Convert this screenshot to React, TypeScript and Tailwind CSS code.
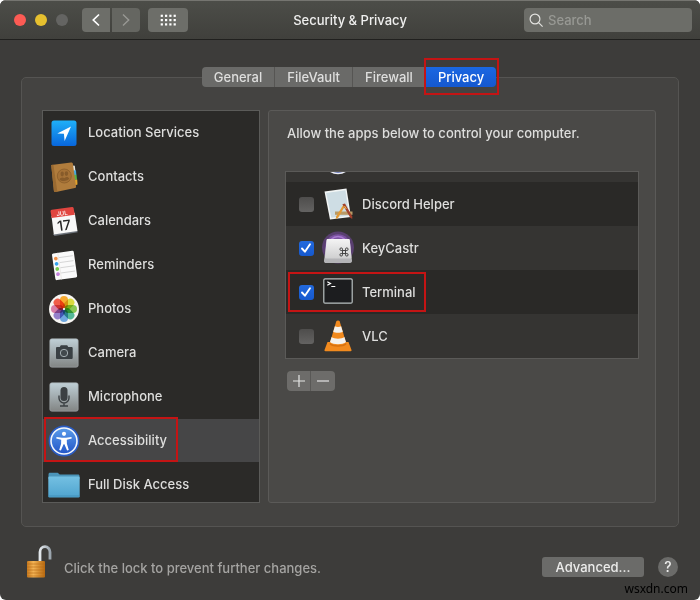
import { useState, type ReactNode } from 'react';

interface SidebarItem {
  label: string;
  icon: ReactNode;
}

interface AppEntry {
  name: string;
  icon: ReactNode;
  checked: boolean;
  highlighted?: boolean;
}

const TABS = ['General', 'FileVault', 'Firewall', 'Privacy'];

function LocationIcon() {
  return (
    <svg viewBox="0 0 32 32" className="size-8" aria-hidden="true">
      <defs>
        <linearGradient id="location-bg" x1="0" y1="0" x2="0" y2="1">
          <stop offset="0" stopColor="#1fb0f8" />
          <stop offset="1" stopColor="#0866dc" />
        </linearGradient>
      </defs>
      <rect x="3.5" y="3.5" width="25" height="25.5" rx="2.5" fill="url(#location-bg)" />
      <path d="M23 9.5 9.3 16.4l6.6.4.7 7.2z" fill="#fff" />
    </svg>
  );
}

function ContactsIcon() {
  return (
    <svg viewBox="0 0 32 32" className="size-8" aria-hidden="true">
      <path d="m24 4.500 2.800.2.600 5.300-2.500.5z" fill="#e4e7e2" />
      <path d="m25 9.500 3-.3.4 5-3 .3z" fill="#4aa7d8" />
      <path d="m25.500 14 3-.3.5 5-3 .3z" fill="#5bb446" />
      <path d="m26 19 3.200-.4.3 5-3 1z" fill="#e3a32c" />
      <path d="M3.200 4 23 1.400c1 0 1.700.4 1.900 1.300L28 25.500c.1.900-.3 1.400-1.200 1.600L8 31c-1.200.2-1.900-.2-2.100-1.200z" fill="#b07c3c" />
      <path d="m3.200 4 2.200-.3 4 27L8 31c-1.200.2-1.900-.2-2.100-1.200z" fill="#9a6a31" />
      <circle cx="16.300" cy="15" r="7" fill="#a57237" stroke="#8a5d2a" strokeWidth=".8" />
      <g fill="#875b2a">
        <ellipse cx="14.200" cy="13" rx="1.700" ry="2.400" />
        <ellipse cx="18.400" cy="12.600" rx="1.700" ry="2.400" />
        <path d="M11.500 18.500c.5-1.700 1.600-2 2.800-2.100 1 0 1.700.3 2.200.9.400-.8 1.100-1.200 2.200-1.300 1.200 0 2.100.5 2.600 1.600-1.300 2.600-7.600 3.400-9.800.9z" />
      </g>
    </svg>
  );
}

function CalendarIcon() {
  return (
    <svg viewBox="0 0 32 32" className="size-8" aria-hidden="true">
      <path d="m5 29 24-3.500.8 1.800L6.500 31z" fill="#6d737b" />
      <path d="m3.500 11 23.200-3.300L29.500 26 5.800 29.500z" fill="#f8f8f8" />
      <path d="M2.600 6.500c-.1-1 .3-1.500 1.200-1.700L24 1.900c.9-.1 1.400.3 1.600 1.200l1.200 6.600L3.600 13z" fill="#e1453f" />
      <g transform="rotate(-8 15 16)" fontFamily="Inter, sans-serif" textAnchor="middle">
        <text x="15" y="10.500" fontSize="6" fill="#fff">JUL</text>
        <text x="15.500" y="25.500" fontSize="14" fill="#262626">17</text>
      </g>
    </svg>
  );
}

function RemindersIcon() {
  return (
    <svg viewBox="0 0 32 32" className="size-8" aria-hidden="true">
      <g transform="rotate(-8 16 16)">
        <rect x="5.500" y="3" width="22" height="27" rx="1.500" fill="#fafafa" />
        <path d="M12 8h14M12 13h14M12 18.200h14M12 23.500h14" stroke="#cfcfcf" strokeWidth=".8" />
        <path d="M11.500 3v27" stroke="#e3dedb" strokeWidth=".6" />
        <circle cx="8.800" cy="8.500" r="1.900" fill="#f0914b" />
        <circle cx="8.800" cy="13.800" r="1.900" fill="#35a2ec" />
        <circle cx="8.800" cy="19" r="1.900" fill="#76c94e" />
        <circle cx="8.800" cy="24.200" r="1.900" fill="#c483dc" />
      </g>
    </svg>
  );
}

const PETALS = ['#f7a21b', '#d6d72c', '#7cc242', '#42b38f', '#5f9fdd', '#8a74c6', '#d3719f', '#ee4d36'];

function PhotosIcon() {
  return (
    <svg viewBox="0 0 32 32" className="size-8" aria-hidden="true">
      <circle cx="16" cy="16" r="15" fill="#f7f5f2" />
      <g className="isolate">
        {PETALS.map((color, i) => (
          <rect
            key={color}
            x="12"
            y="3"
            width="8"
            height="12.500"
            rx="4"
            fill={color}
            fillOpacity=".9"
            className="mix-blend-multiply"
            transform={`rotate(${i * 45} 16 16)`}
          />
        ))}
      </g>
      <circle cx="16" cy="16" r="1" fill="#fff" />
    </svg>
  );
}

function SilverTile({ id, children }: { id: string; children: ReactNode }) {
  return (
    <svg viewBox="0 0 32 32" className="size-8" aria-hidden="true">
      <defs>
        <linearGradient id={id} x1="0" y1="0" x2="0" y2="1">
          <stop offset="0" stopColor="#c0d0d7" />
          <stop offset="1" stopColor="#828584" />
        </linearGradient>
      </defs>
      <rect x="1.800" y="1.800" width="28.400" height="28.400" rx="2" fill={`url(#${id})`} stroke="#a4aaac" strokeWidth=".6" />
      {children}
    </svg>
  );
}

function CameraIcon() {
  return (
    <SilverTile id="camera-bg">
      <path d="M9.300 10h2.500l1-1.800h6.400l1 1.800h3.200c.8 0 1.300.5 1.300 1.300v9.400c0 .8-.5 1.300-1.300 1.300H9.300c-.8 0-1.300-.5-1.300-1.300v-9.400c0-.8.5-1.300 1.300-1.300z" fill="#3a4044" />
      <circle cx="16" cy="16" r="3.700" fill="#42494d" stroke="#a3adb1" strokeWidth="1" />
    </SilverTile>
  );
}

function MicrophoneIcon() {
  return (
    <SilverTile id="microphone-bg">
      <rect x="12.500" y="6" width="7" height="14" rx="3.500" fill="#3b4043" />
      <path d="M11 14.500V17a5 5 0 0 0 10 0v-2.500M16 22v2.500M12 25h8" fill="none" stroke="#3b4043" strokeWidth="1.400" />
    </SilverTile>
  );
}

function AccessibilityIcon() {
  return (
    <svg viewBox="0 0 32 32" className="size-8" aria-hidden="true">
      <defs>
        <linearGradient id="accessibility-bg" x1="0" y1="0" x2="0" y2="1">
          <stop offset="0" stopColor="#5a9bea" />
          <stop offset="1" stopColor="#2356c8" />
        </linearGradient>
      </defs>
      <circle cx="16" cy="16" r="15.400" fill="#2a5cc4" />
      <circle cx="16" cy="16" r="13" fill="url(#accessibility-bg)" stroke="#f2f6fc" strokeWidth="1.600" />
      <circle cx="16" cy="8.800" r="2.100" fill="#fff" />
      <path d="m8.500 12 5.500.7h4l5.500-.7.2 1.500-4.900 1.200.1 4 1.900 6.300-1.700.5-2.700-6.300h-.8l-2.700 6.300-1.700-.5 1.900-6.300.1-4-4.900-1.200z" fill="#fff" />
    </svg>
  );
}

function FolderIcon() {
  return (
    <svg viewBox="0 0 32 32" className="size-8" aria-hidden="true">
      <defs>
        <linearGradient id="folder-bg" x1="0" y1="0" x2="0" y2="1">
          <stop offset="0" stopColor="#74c0e2" />
          <stop offset="1" stopColor="#4fa4cf" />
        </linearGradient>
      </defs>
      <path d="M.5 5.500c0-1.200.6-1.800 1.500-1.800h7.500c1 0 1.500 1.900 2.500 1.900h18c1 0 1.500.6 1.500 1.500V10H.5z" fill="#4b94b8" />
      <rect x=".3" y="7.500" width="31.400" height="21" rx="1.200" fill="url(#folder-bg)" />
      <path d="M.5 27h31" stroke="#3d8ab2" strokeWidth=".7" />
    </svg>
  );
}

function PartialAppIcon() {
  return (
    <svg viewBox="0 0 32 32" className="size-8 shrink-0" aria-hidden="true">
      <circle cx="16" cy="9.500" r="14" fill="#4a5cae" stroke="#e9ebf2" strokeWidth="1.500" />
    </svg>
  );
}

function DiscordHelperIcon() {
  return (
    <svg viewBox="0 0 32 32" className="size-8" aria-hidden="true">
      <path d="m2.500 3.500 22-3L29 29 8 31.500z" fill="#f2f5f5" />
      <path d="m4.200 4.900 19.200-2.600L27.300 27.500 9.300 29.700z" fill="#cedde4" />
      <path d="M13 23.500h17.500v3.300H13z" fill="#b99a66" />
      <path d="m21.200 17 1.700 1.200L16 30l-2.200.9.3-2.300z" fill="#e39a36" />
      <path d="m20.400 16.200 2.600-.8 7.300 13-.1 2.500-2-1.300z" fill="#a2402c" />
      <path d="m22.500 18 1.800 3" stroke="#f3c34f" strokeWidth="1" />
    </svg>
  );
}

function KeyCastrIcon() {
  return (
    <svg viewBox="0 0 32 32" className="size-8 overflow-visible" aria-hidden="true">
      <defs>
        <linearGradient id="keycap" x1="0" y1="0" x2="0" y2="1">
          <stop offset="0" stopColor="#f4f4f4" />
          <stop offset="1" stopColor="#cfcfd0" />
        </linearGradient>
      </defs>
      <circle cx="16" cy="15.500" r="16" fill="#593f70" />
      <circle cx="16" cy="15" r="12.800" fill="#7b52a0" />
      <circle cx="16" cy="14" r="9.500" fill="none" stroke="#a779cf" strokeWidth="1.500" />
      <path d="M5 7.500h22.500l2.500 21c.1 1.500-.5 2.500-2 2.500H4c-1.500 0-2.200-1-2-2.500z" fill="#b4b4b7" />
      <path d="M5.800 7h20.700c.8 0 1.200.4 1.300 1.100l1.600 17c.1 1-.4 1.500-1.300 1.500H4.300c-.9 0-1.400-.5-1.300-1.500L4.500 8.100c.1-.7.500-1.100 1.300-1.100z" fill="url(#keycap)" />
      <path d="M20.500 18.500h3v3h-3zM20.500 18.500h-1.300a1.300 1.300 0 1 1 1.300-1.300zM23.500 18.500v-1.300a1.300 1.300 0 1 1 1.300 1.300zM23.500 21.500h1.300a1.300 1.300 0 1 1-1.300 1.300zM20.500 21.500v1.300a1.300 1.300 0 1 1-1.300-1.300z" fill="none" stroke="#333" strokeWidth=".9" />
    </svg>
  );
}

function TerminalIcon() {
  return (
    <svg viewBox="0 0 32 32" className="size-8" aria-hidden="true">
      <rect x="1.800" y="2.800" width="28.400" height="24.400" rx="1.200" fill="#1c1d1f" stroke="#b9c1c1" strokeWidth="1.200" />
      <path d="m5.300 5.800 3.200 1.700-3.200 1.700M9.300 10.500h4" fill="none" stroke="#fff" strokeWidth="1.200" />
    </svg>
  );
}

function VlcIcon() {
  return (
    <svg viewBox="0 0 32 32" className="size-8" aria-hidden="true">
      <path d="M5.500 22h21l3 8c.2.700-.1 1.200-.9 1.200H3.400c-.8 0-1.100-.5-.9-1.200z" fill="#f28a1e" />
      <path d="M8 22.500c2.500 3.500 13.500 3.500 16 0l.4 2c-3 3-13.800 3-16.800 0z" fill="#d87210" />
      <path d="M14.300 1.300c.6-1.100 2.800-1.100 3.400 0L24 22.500c-2.500 3.300-13.500 3.300-16 0z" fill="#f28a1e" />
      <path d="M12.900 6.300c1.500 1 4.700 1 6.200 0l1.700 5.400c-2 1.500-7.600 1.500-9.600 0z" fill="#f4f2ef" />
      <path d="M9.600 17c2.700 2.300 10.100 2.300 12.800 0l1.600 5c-3 3-13 3-16 0z" fill="#f4f2ef" />
    </svg>
  );
}

function LockIcon() {
  return (
    <svg viewBox="0 0 28 36" className="h-9 w-7" aria-hidden="true">
      <defs>
        <linearGradient id="lock-body" x1="0" y1="0" x2="1" y2="0">
          <stop offset="0" stopColor="#c87a1e" />
          <stop offset=".35" stopColor="#f3b455" />
          <stop offset="1" stopColor="#b8690f" />
        </linearGradient>
        <linearGradient id="lock-shackle" x1="0" y1="0" x2="1" y2="0">
          <stop offset="0" stopColor="#e3e8ec" />
          <stop offset="1" stopColor="#9ba5ae" />
        </linearGradient>
      </defs>
      <path d="M16 16V7a5 5.300 0 0 1 10 0v7.500" fill="none" stroke="url(#lock-shackle)" strokeWidth="2.800" />
      <rect x="3" y="16" width="18" height="16.500" rx="1" fill="url(#lock-body)" />
      <path d="M3 19h18M3 22h18M3 25h18M3 28h18M3 31h18" stroke="#b56a15" strokeWidth=".6" />
    </svg>
  );
}

const SIDEBAR_ITEMS: SidebarItem[] = [
  { label: 'Location Services', icon: <LocationIcon /> },
  { label: 'Contacts', icon: <ContactsIcon /> },
  { label: 'Calendars', icon: <CalendarIcon /> },
  { label: 'Reminders', icon: <RemindersIcon /> },
  { label: 'Photos', icon: <PhotosIcon /> },
  { label: 'Camera', icon: <CameraIcon /> },
  { label: 'Microphone', icon: <MicrophoneIcon /> },
  { label: 'Accessibility', icon: <AccessibilityIcon /> },
  { label: 'Full Disk Access', icon: <FolderIcon /> },
];

const INITIAL_APPS: AppEntry[] = [
  { name: 'Discord Helper', icon: <DiscordHelperIcon />, checked: false },
  { name: 'KeyCastr', icon: <KeyCastrIcon />, checked: true },
  { name: 'Terminal', icon: <TerminalIcon />, checked: true, highlighted: true },
  { name: 'VLC', icon: <VlcIcon />, checked: false },
];

function TitleBar() {
  return (
    <header className="grid h-10 shrink-0 grid-cols-[1fr_auto_1fr] items-center border-t border-b border-t-[#757570] border-b-[#20201e] bg-linear-to-b from-[#4c4d48] to-[#40403c] px-2">
      <div className="flex items-center pl-1.5">
        <div className="flex gap-[9px]">
          <button type="button" aria-label="Close" className="size-3 rounded-full bg-[#fc5b54]" />
          <button type="button" aria-label="Minimize" className="size-3 rounded-full bg-[#e6c02f]" />
          <button type="button" aria-label="Zoom" disabled className="size-3 rounded-full bg-[#646462]" />
        </div>
        <div className="ml-3.5 flex gap-0.5">
          <button type="button" aria-label="Back" className="flex h-6 w-7 items-center justify-center rounded-l-sm bg-[#6d6e69]">
            <svg viewBox="0 0 10 14" className="h-3.5 w-2.5" aria-hidden="true">
              <path d="M8 1.500 2.300 7 8 12.500" fill="none" stroke="#fff" strokeWidth="1.700" />
            </svg>
          </button>
          <button type="button" aria-label="Forward" disabled className="flex h-6 w-7 items-center justify-center rounded-r-sm bg-[#656661]">
            <svg viewBox="0 0 10 14" className="h-3.5 w-2.5" aria-hidden="true">
              <path d="m2 1.500 5.700 5.500L2 12.500" fill="none" stroke="#989894" strokeWidth="1.400" />
            </svg>
          </button>
        </div>
        <button type="button" aria-label="Show All" className="ml-2 flex h-6 w-10 items-center justify-center rounded-sm bg-[#6d6e69]">
          <svg viewBox="0 0 16 12" className="h-3 w-4" fill="#fff" aria-hidden="true">
            {[0, 1, 2].map((row) =>
              [0, 1, 2, 3].map((col) => (
                <rect key={`${row}-${col}`} x={0.7 + col * 4.3} y={0.7 + row * 4.3} width="2.200" height="2.200" />
              )),
            )}
          </svg>
        </button>
      </div>
      <h1 className="text-[#efefee]">Security &amp; Privacy</h1>
      <label className="flex h-6 w-[168px] items-center gap-1 justify-self-end rounded-sm bg-[#6c6d68] px-1">
        <svg viewBox="0 0 16 16" className="size-4 shrink-0" fill="none" stroke="#e2e2df" strokeWidth="1.200" aria-hidden="true">
          <circle cx="7" cy="7" r="4.900" />
          <path d="m10.600 10.600 4 4" />
        </svg>
        <input
          type="search"
          aria-label="Search"
          placeholder="Search"
          className="w-full min-w-0 bg-transparent text-white outline-none placeholder:text-[#989994]"
        />
      </label>
    </header>
  );
}

function Sidebar() {
  const [selected, setSelected] = useState('Accessibility');
  return (
    <nav className="w-[218px] shrink-0 overflow-hidden border border-[#5b5b59] bg-[#2b2a28]">
      <ul>
        {SIDEBAR_ITEMS.map(({ label, icon }) => {
          const active = label === selected;
          return (
            <li key={label} className="relative h-11 pb-px">
              <button
                type="button"
                onClick={() => setSelected(label)}
                className={`flex h-full w-full items-center gap-2 pl-[5px] text-left ${active ? 'bg-[#464647]' : ''}`}
              >
                {icon}
                <span className="pb-0.5">{label}</span>
              </button>
              {active && <span className="pointer-events-none absolute -top-0.5 left-px h-[45px] w-[134px] border-2 border-[#c41414]" />}
            </li>
          );
        })}
      </ul>
    </nav>
  );
}

function AppList() {
  const [apps, setApps] = useState(INITIAL_APPS);
  const toggle = (name: string) =>
    setApps(apps.map((app) => (app.name === name ? { ...app, checked: !app.checked } : app)));

  return (
    <ul className="border border-[#5b5a58]">
      {/* Bottom edge of the row scrolled out of view */}
      <li className="flex h-2.5 items-end overflow-hidden bg-[#353432] pl-9">
        <PartialAppIcon />
      </li>
      {apps.map(({ name, icon, checked, highlighted }) => (
        <li key={name} className="relative h-11 odd:bg-[#353432] even:bg-[#2a2927]">
          <label className="flex h-full items-center pl-3">
            <span className="mr-2 grid size-4 place-items-center">
              <input
                type="checkbox"
                checked={checked}
                onChange={() => toggle(name)}
                className="col-start-1 row-start-1 size-[15px] appearance-none rounded-[3px] bg-linear-to-b from-[#4e4d4c] to-[#646362] checked:from-[#2269dd] checked:to-[#1659cf]"
              />
              {checked && (
                <svg viewBox="0 0 16 16" className="pointer-events-none col-start-1 row-start-1 size-4" aria-hidden="true">
                  <path d="m4 8.500 2.900 3.200L12 4.300" fill="none" stroke="#fff" strokeWidth="1.900" strokeLinecap="round" strokeLinejoin="round" />
                </svg>
              )}
            </span>
            <span className="mr-2">{icon}</span>
            {name}
          </label>
          {highlighted && <span className="pointer-events-none absolute top-0.5 left-0.5 h-10 w-[138px] border-2 border-[#c41414]" />}
        </li>
      ))}
    </ul>
  );
}

export default function App() {
  const [tab, setTab] = useState('Privacy');
  return (
    <div className="h-screen bg-white">
      <div className="flex h-full flex-col overflow-hidden rounded-md bg-[#3d3c3a] font-[Inter,sans-serif] text-[13px] leading-5 font-medium text-[#dededd]">
        <TitleBar />

        <main className="mx-[21px] mt-[37px] flex min-h-0 flex-1 flex-col rounded-[5px] border border-[#555452] bg-[#444341] pr-[22px] pb-[23px] pl-5">
          <div role="tablist" className="-mt-[11px] flex shrink-0 justify-center">
            {TABS.map((name) => {
              const active = name === tab;
              return (
                <div key={name} className="group relative">
                  <button
                    type="button"
                    role="tab"
                    aria-selected={active}
                    onClick={() => setTab(name)}
                    className={`h-5 px-3 group-first:rounded-l-sm group-last:rounded-r-sm ${
                      active ? 'bg-linear-to-b from-[#1b67e2] to-[#1558cf] text-white' : 'border-r border-[#565553] bg-[#6a6a68]'
                    }`}
                  >
                    {name}
                  </button>
                  {active && <span className="pointer-events-none absolute -top-[9px] -right-[3px] -bottom-2 -left-0.5 border-2 border-[#c41414]" />}
                </div>
              );
            })}
          </div>

          <div className="mt-[23px] flex min-h-0 flex-1 gap-2">
            <Sidebar />
            <section className="min-w-0 flex-1 rounded-[3px] border border-[#5b5a58] bg-[#4a4947] px-4 pt-3">
              <h2 className="px-0.5">Allow the apps below to control your computer.</h2>
              <div className="mt-7">
                <AppList />
              </div>
              <div className="mt-3 ml-0.5 flex">
                <button type="button" aria-label="Add app" className="flex h-5 w-6 items-center justify-center rounded-l-sm border-r border-[#595856] bg-[#6d6c6a]">
                  <svg viewBox="0 0 12 12" className="size-3" aria-hidden="true">
                    <path d="M6 0v12M0 6h12" stroke="#e5e5e4" strokeWidth="1.200" />
                  </svg>
                </button>
                <button type="button" aria-label="Remove app" className="flex h-5 w-6 items-center justify-center rounded-r-sm bg-[#6d6c6a]">
                  <svg viewBox="0 0 12 12" className="size-3" aria-hidden="true">
                    <path d="M0 6h12" stroke="#e5e5e4" strokeWidth="1.200" />
                  </svg>
                </button>
              </div>
            </section>
          </div>
        </main>

        <footer className="flex h-[73px] shrink-0 flex-col pr-[22px] pl-6">
          <div className="mt-[18px] flex items-center">
            <button type="button" className="flex items-center gap-3 text-[#a5a4a2]">
              <LockIcon />
              <span className="pt-2.5">Click the lock to prevent further changes.</span>
            </button>
            <button type="button" className="mt-2 ml-auto h-5 w-[102px] rounded-[3px] bg-[#6b6b69] text-[#ececeb]">
              Advanced...
            </button>
            <button type="button" aria-label="Help" className="mt-2 ml-3.5 size-5 rounded-full bg-[#6b6b69] text-sm leading-5 text-[#ececeb]">
              ?
            </button>
          </div>
          <p className="-mr-2.5 self-end font-['Noto_Sans',sans-serif] text-xs leading-4 font-normal text-black">wsxdn.com</p>
        </footer>
      </div>
    </div>
  );
}
